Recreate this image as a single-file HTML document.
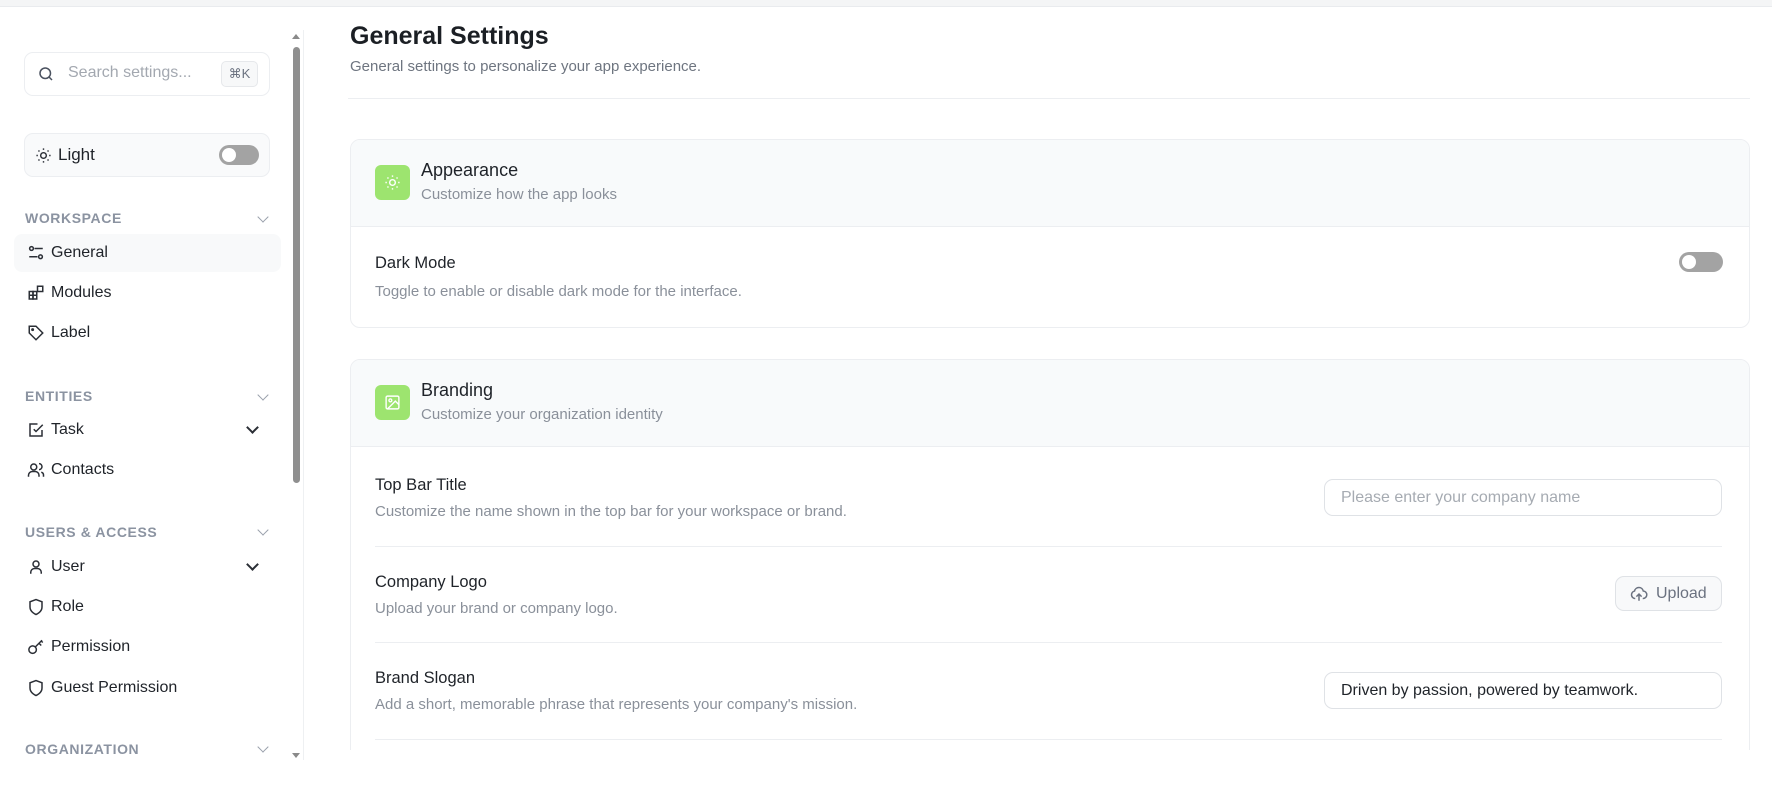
<!DOCTYPE html>
<html><head><meta charset="utf-8"><style>
*{box-sizing:border-box;margin:0;padding:0}
html,body{width:1772px;height:797px;overflow:hidden}
body{background:#fff;font-family:"Liberation Sans",sans-serif;color:#1f2329;position:relative}
.a{position:absolute}
.topbar{left:0;top:0;width:1772px;height:7px;background:#f4f5f6;border-bottom:1px solid #e9ebee}
.box{border:1px solid #eceef1;border-radius:9px}
.sec{font-size:14px;font-weight:bold;color:#8b93a1;letter-spacing:.6px;left:25px}
.chev{width:8px;height:8px;border-right:1.5px solid #9aa1ac;border-bottom:1.5px solid #9aa1ac;transform:rotate(45deg)}
.chev2{width:9px;height:9px;border-right:2px solid #2b2f36;border-bottom:2px solid #2b2f36;transform:rotate(45deg)}
.nav{left:51px;font-size:16px;color:#1f2329}
.ic{left:27px}
.tog{width:40px;height:20px;border-radius:10px;background:#a3a3a3}
.tog::after{content:"";position:absolute;left:3px;top:3px;width:14px;height:14px;border-radius:50%;background:#fff}
.lbl{font-size:16.5px;color:#1f2329;left:375px}
.desc{font-size:15px;color:#8a909a;left:375px}
.inp{border:1px solid #dfe2e6;border-radius:9px;font-size:16px;padding-left:16px;display:flex;align-items:center}
.hr{left:375px;width:1347px;height:1px;background:#eceef1}
</style></head><body>
<div class="a topbar"></div>

<div class="a box" style="left:24px;top:52px;width:246px;height:44px"></div>
<svg class="a" style="left:37px;top:65px" width="18" height="18" viewBox="0 0 24 24" fill="none" stroke="#4b5260" stroke-width="2"><circle cx="11" cy="11" r="7"/><path d="M20 20l-4-4"/></svg>
<div class="a" style="left:68px;top:64px;font-size:16px;color:#a3a8b0">Search settings...</div>
<div class="a" style="left:221px;top:61px;width:37px;height:26px;border:1px solid #e6e8eb;border-radius:5px;background:#f7f8f9;font-size:13px;color:#6b7280;text-align:center;line-height:24px">⌘K</div>

<div class="a box" style="left:24px;top:133px;width:246px;height:44px;background:#f9fafb"></div>
<svg class="a" style="left:35px;top:147px" width="17" height="17" viewBox="0 0 24 24" fill="none" stroke="#2b2f36" stroke-width="2"><circle cx="12" cy="12" r="4"/><path d="M12 2v2M12 20v2M4.9 4.9l1.4 1.4M17.7 17.7l1.4 1.4M2 12h2M20 12h2M4.9 19.1l1.4-1.4M17.7 6.3l1.4-1.4"/></svg>
<div class="a" style="left:58px;top:145px;font-size:17px">Light</div>
<div class="a tog" style="left:219px;top:145px"></div>

<div class="a sec" style="top:210px">WORKSPACE</div><div class="a chev" style="left:259px;top:213px"></div>
<div class="a" style="left:14px;top:234px;width:267px;height:38px;background:#f8f9fa;border-radius:8px"></div>
<svg class="a ic" style="top:244px" width="18" height="18" viewBox="0 0 24 24" fill="none" stroke="#2b2f36" stroke-width="2"><circle cx="6" cy="6" r="2.5"/><path d="M10 6h11M3 17h11"/><circle cx="18" cy="17" r="2.5"/></svg>
<div class="a nav" style="top:244px">General</div>
<svg class="a ic" style="top:284px" width="18" height="18" viewBox="0 0 24 24" fill="none" stroke="#2b2f36" stroke-width="2"><rect x="3" y="10" width="5" height="5"/><rect x="3" y="15" width="5" height="5"/><rect x="8" y="15" width="5" height="5"/><rect x="8" y="10" width="5" height="5"/><rect x="14" y="3" width="7" height="7"/></svg>
<div class="a nav" style="top:284px">Modules</div>
<svg class="a ic" style="top:324px" width="18" height="18" viewBox="0 0 24 24" fill="none" stroke="#2b2f36" stroke-width="2"><path d="M3 3h9l9 9-9 9-9-9z"/><circle cx="7.5" cy="7.5" r="1"/></svg>
<div class="a nav" style="top:324px">Label</div>

<div class="a sec" style="top:388px">ENTITIES</div><div class="a chev" style="left:259px;top:391px"></div>
<svg class="a ic" style="top:421px" width="18" height="18" viewBox="0 0 24 24" fill="none" stroke="#2b2f36" stroke-width="2"><path d="M20 12v8H4V4h10"/><path d="M9 11l3 3 9-9"/></svg>
<div class="a nav" style="top:421px">Task</div><div class="a chev2" style="left:248px;top:423px"></div>
<svg class="a ic" style="top:461px" width="18" height="18" viewBox="0 0 24 24" fill="none" stroke="#2b2f36" stroke-width="2"><circle cx="9" cy="8" r="4"/><path d="M2 21v-2a5 5 0 0 1 5-5h4a5 5 0 0 1 5 5v2M16 3.5a4 4 0 0 1 0 8M22 21v-2a4 4 0 0 0-3-4"/></svg>
<div class="a nav" style="top:461px">Contacts</div>

<div class="a sec" style="top:524px">USERS &amp; ACCESS</div><div class="a chev" style="left:259px;top:526px"></div>
<svg class="a ic" style="top:558px" width="18" height="18" viewBox="0 0 24 24" fill="none" stroke="#2b2f36" stroke-width="2"><circle cx="12" cy="8" r="4"/><path d="M5 21v-2a5 5 0 0 1 5-5h4a5 5 0 0 1 5 5v2"/></svg>
<div class="a nav" style="top:558px">User</div><div class="a chev2" style="left:248px;top:560px"></div>
<svg class="a ic" style="top:598px" width="18" height="18" viewBox="0 0 24 24" fill="none" stroke="#2b2f36" stroke-width="2"><path d="M12 22s8-3 8-10V5l-8-3-8 3v7c0 7 8 10 8 10z"/></svg>
<div class="a nav" style="top:598px">Role</div>
<svg class="a ic" style="top:638px" width="18" height="18" viewBox="0 0 24 24" fill="none" stroke="#2b2f36" stroke-width="2"><circle cx="7.5" cy="15.5" r="5"/><path d="M11 12l9-9M16 7l3 3M19 4l2 2"/></svg>
<div class="a nav" style="top:638px">Permission</div>
<svg class="a ic" style="top:679px" width="18" height="18" viewBox="0 0 24 24" fill="none" stroke="#2b2f36" stroke-width="2"><path d="M12 22s8-3 8-10V5l-8-3-8 3v7c0 7 8 10 8 10z"/></svg>
<div class="a nav" style="top:679px">Guest Permission</div>
<div class="a sec" style="top:741px">ORGANIZATION</div><div class="a chev" style="left:259px;top:743px"></div>

<div class="a" style="left:303px;top:30px;width:1px;height:730px;background:#eef0f2"></div>
<div class="a" style="left:292px;top:34px;width:0;height:0;border-left:4px solid transparent;border-right:4px solid transparent;border-bottom:5px solid #8a8a8a"></div>
<div class="a" style="left:293px;top:47px;width:7px;height:436px;background:#8f8f8f;border-radius:4px"></div>
<div class="a" style="left:292px;top:753px;width:0;height:0;border-left:4px solid transparent;border-right:4px solid transparent;border-top:5px solid #8a8a8a"></div>

<div class="a" style="left:350px;top:22px;font-size:25px;font-weight:600;color:#1b1f24">General Settings</div>
<div class="a" style="left:350px;top:58px;font-size:15px;color:#6e7580">General settings to personalize your app experience.</div>
<div class="a" style="left:348px;top:98px;width:1402px;height:1px;background:#eceef1"></div>

<div class="a box" style="left:350px;top:139px;width:1400px;height:189px;border-radius:10px;overflow:hidden">
  <div style="height:87px;background:#f8fafb;border-bottom:1px solid #eceef1"></div>
</div>
<div class="a" style="left:375px;top:165px;width:35px;height:35px;border-radius:6px;background:#9de46f"></div>
<svg class="a" style="left:384px;top:174px" width="17" height="17" viewBox="0 0 24 24" fill="none" stroke="#fff" stroke-width="2"><circle cx="12" cy="12" r="4"/><path d="M12 2v2M12 20v2M4.9 4.9l1.4 1.4M17.7 17.7l1.4 1.4M2 12h2M20 12h2M4.9 19.1l1.4-1.4M17.7 6.3l1.4-1.4"/></svg>
<div class="a" style="left:421px;top:160px;font-size:18px;font-weight:500">Appearance</div>
<div class="a" style="left:421px;top:186px;font-size:15px;color:#8a909a">Customize how the app looks</div>
<div class="a lbl" style="top:254px">Dark Mode</div>
<div class="a desc" style="top:283px">Toggle to enable or disable dark mode for the interface.</div>
<div class="a tog" style="left:1679px;top:252px;width:44px;height:20px"></div>

<div class="a box" style="left:350px;top:359px;width:1400px;height:420px;border-radius:10px;overflow:hidden">
  <div style="height:87px;background:#f8fafb;border-bottom:1px solid #eceef1"></div>
</div>
<div class="a" style="left:375px;top:385px;width:35px;height:35px;border-radius:6px;background:#9de46f"></div>
<svg class="a" style="left:384px;top:394px" width="17" height="17" viewBox="0 0 24 24" fill="none" stroke="#fff" stroke-width="2"><rect x="3" y="3" width="18" height="18" rx="2"/><circle cx="9" cy="9" r="2"/><path d="M21 15l-5-5L5 21"/></svg>
<div class="a" style="left:421px;top:380px;font-size:18px;font-weight:500">Branding</div>
<div class="a" style="left:421px;top:406px;font-size:15px;color:#8a909a">Customize your organization identity</div>

<div class="a lbl" style="top:476px">Top Bar Title</div>
<div class="a desc" style="top:503px">Customize the name shown in the top bar for your workspace or brand.</div>
<div class="a inp" style="left:1324px;top:479px;width:398px;height:37px;color:#a6abb2">Please enter your company name</div>
<div class="a hr" style="top:546px"></div>

<div class="a lbl" style="top:573px">Company Logo</div>
<div class="a desc" style="top:600px">Upload your brand or company logo.</div>
<div class="a inp" style="left:1615px;top:576px;width:107px;height:35px;background:#f8f9fa;color:#6b7280;padding-left:13px;gap:7px">
<svg width="20" height="18" viewBox="0 0 24 24" fill="none" stroke="#6b7280" stroke-width="2"><path d="M7 18a5 5 0 0 1-1-9.9A6 6 0 0 1 17.7 8 4.5 4.5 0 0 1 17 18"/><path d="M12 12v9M8.5 15.5L12 12l3.5 3.5"/></svg>Upload</div>
<div class="a hr" style="top:642px"></div>

<div class="a lbl" style="top:669px">Brand Slogan</div>
<div class="a desc" style="top:696px">Add a short, memorable phrase that represents your company's mission.</div>
<div class="a inp" style="left:1324px;top:672px;width:398px;height:37px;color:#1f2329">Driven by passion, powered by teamwork.</div>
<div class="a hr" style="top:739px"></div>
<div class="a" style="left:320px;top:750px;width:1452px;height:47px;background:#fff;z-index:10"></div>
</body></html>
